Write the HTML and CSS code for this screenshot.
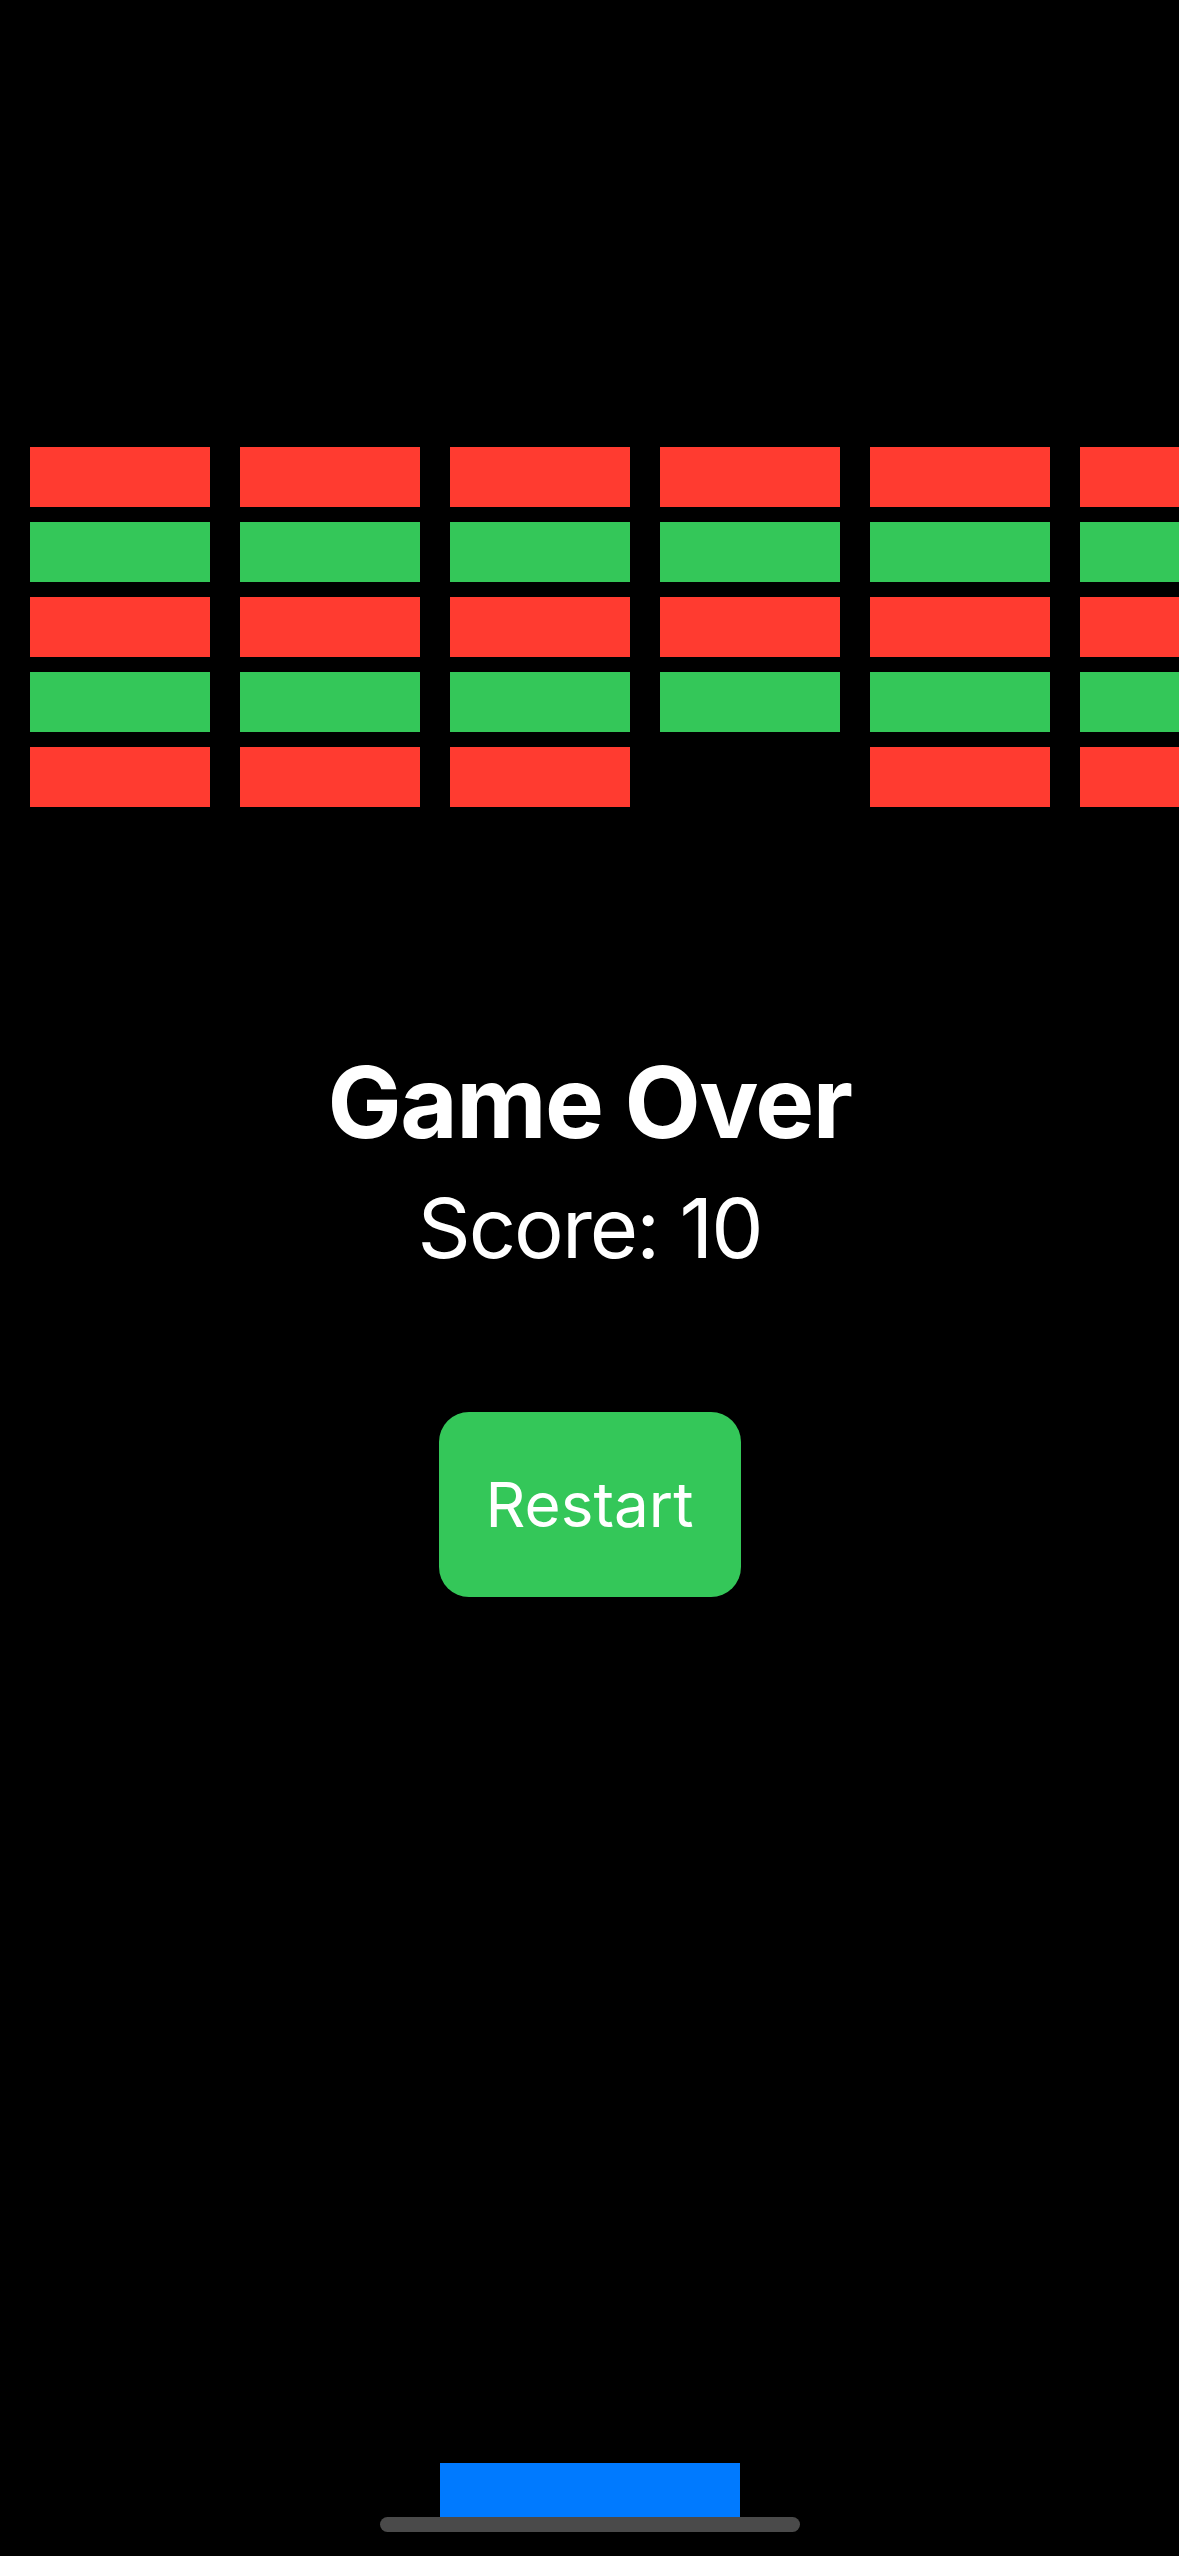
FILE: index.html
```html
<!DOCTYPE html>
<html>
<head>
<meta charset="utf-8">
<link rel="stylesheet" href="styles.css">
</head>
<body>
<div class="screen">
  <div class="bricks">
    <div class="brick red"></div><div class="brick red"></div><div class="brick red"></div><div class="brick red"></div><div class="brick red"></div><div class="brick red"></div>
    <div class="brick green"></div><div class="brick green"></div><div class="brick green"></div><div class="brick green"></div><div class="brick green"></div><div class="brick green"></div>
    <div class="brick red"></div><div class="brick red"></div><div class="brick red"></div><div class="brick red"></div><div class="brick red"></div><div class="brick red"></div>
    <div class="brick green"></div><div class="brick green"></div><div class="brick green"></div><div class="brick green"></div><div class="brick green"></div><div class="brick green"></div>
    <div class="brick red"></div><div class="brick red"></div><div class="brick red"></div><div class="brick empty"></div><div class="brick red"></div><div class="brick red"></div>
  </div>
  <div class="title">Game Over</div>
  <div class="score">Score: 10</div>
  <div class="restart">Restart</div>
  <div class="paddle"></div>
  <div class="home-indicator"></div>
</div>
</body>
</html>
```
FILE: styles.css
```css
html, body {
  margin: 0;
  padding: 0;
  background: #000;
}
.screen {
  width: 1179px;
  height: 2556px;
  overflow: hidden;
  display: flex;
  flex-direction: column;
  align-items: center;
  font-family: Inter, "Liberation Sans", sans-serif;
  color: #fff;
}
.bricks {
  align-self: stretch;
  margin-top: 447px;
  padding-left: 30px;
  display: grid;
  grid-template-columns: repeat(6, 180px);
  grid-auto-rows: 60px;
  column-gap: 30px;
  row-gap: 15px;
  overflow: hidden;
}
.brick.red { background: #FF3B30; }
.brick.green { background: #34C759; }
.brick.empty { background: transparent; }
.title {
  margin-top: 235px;
  font-size: 99px;
  line-height: 120px;
  font-weight: 700;
  letter-spacing: -1.5px;
}
.score {
  margin-top: 16px;
  font-size: 83px;
  line-height: 100px;
  font-weight: 400;
  letter-spacing: -2px;
}
.restart {
  margin-top: 134px;
  width: 302px;
  height: 185px;
  border-radius: 30px;
  background: #34C759;
  display: flex;
  align-items: center;
  justify-content: center;
  font-size: 62px;
  line-height: 75px;
}
.paddle {
  margin-top: auto;
  width: 300px;
  height: 54px;
  background: #007AFF;
}
.home-indicator {
  width: 420px;
  height: 15px;
  border-radius: 8px;
  background: #4a4a4a;
  margin-bottom: 24px;
}
```
